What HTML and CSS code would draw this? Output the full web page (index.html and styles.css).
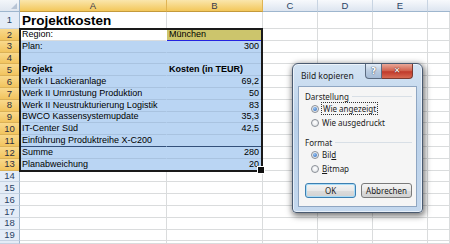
FILE: index.html
```html
<!DOCTYPE html>
<html lang="de">
<head>
<meta charset="utf-8">
<title>Projektkosten</title>
<link rel="stylesheet" href="styles.css">
</head>
<body>
<div class="sheet">
  <div class="corner"></div><div class="ch on">A</div><div class="ch on">B</div><div class="ch">C</div><div class="ch">D</div><div class="ch">E</div><div class="ch last"></div>

  <div class="rh">1</div><div class="c a title">Projektkosten</div><div class="c"></div><div class="c"></div><div class="c"></div><div class="c"></div><div class="c"></div>

  <div class="rh on">2</div><div class="c a act">Region:</div><div class="c b2">München</div><div class="c"></div><div class="c"></div><div class="c"></div><div class="c"></div>
  <div class="rh on">3</div><div class="c a s">Plan:</div><div class="c s n">300</div><div class="c"></div><div class="c"></div><div class="c"></div><div class="c"></div>
  <div class="rh on">4</div><div class="c a s"></div><div class="c s"></div><div class="c"></div><div class="c"></div><div class="c"></div><div class="c"></div>
  <div class="rh on">5</div><div class="c a s bold">Projekt</div><div class="c s bold">Kosten (in TEUR)</div><div class="c"></div><div class="c"></div><div class="c"></div><div class="c"></div>
  <div class="rh on">6</div><div class="c a s">Werk I Lackieranlage</div><div class="c s n">69,2</div><div class="c"></div><div class="c"></div><div class="c"></div><div class="c"></div>
  <div class="rh on">7</div><div class="c a s">Werk II Umrüstung Produktion</div><div class="c s n">50</div><div class="c"></div><div class="c"></div><div class="c"></div><div class="c"></div>
  <div class="rh on">8</div><div class="c a s">Werk II Neustrukturierung Logistik</div><div class="c s n">83</div><div class="c"></div><div class="c"></div><div class="c"></div><div class="c"></div>
  <div class="rh on">9</div><div class="c a s">BWCO Kassensystemupdate</div><div class="c s n">35,3</div><div class="c"></div><div class="c"></div><div class="c"></div><div class="c"></div>
  <div class="rh on">10</div><div class="c a s">IT-Center Süd</div><div class="c s n">42,5</div><div class="c"></div><div class="c"></div><div class="c"></div><div class="c"></div>
  <div class="rh on">11</div><div class="c a s bb">Einführung Produktreihe X-C200</div><div class="c s bb"></div><div class="c"></div><div class="c"></div><div class="c"></div><div class="c"></div>
  <div class="rh on">12</div><div class="c a s">Summe</div><div class="c s n">280</div><div class="c"></div><div class="c"></div><div class="c"></div><div class="c"></div>
  <div class="rh on">13</div><div class="c a s">Planabweichung</div><div class="c s n">20</div><div class="c"></div><div class="c"></div><div class="c"></div><div class="c"></div>

  <div class="rh">14</div><div class="c a"></div><div class="c"></div><div class="c"></div><div class="c"></div><div class="c"></div><div class="c"></div>
  <div class="rh">15</div><div class="c a"></div><div class="c"></div><div class="c"></div><div class="c"></div><div class="c"></div><div class="c"></div>
  <div class="rh">16</div><div class="c a"></div><div class="c"></div><div class="c"></div><div class="c"></div><div class="c"></div><div class="c"></div>
  <div class="rh">17</div><div class="c a"></div><div class="c"></div><div class="c"></div><div class="c"></div><div class="c"></div><div class="c"></div>
  <div class="rh">18</div><div class="c a"></div><div class="c"></div><div class="c"></div><div class="c"></div><div class="c"></div><div class="c"></div>
  <div class="rh">19</div><div class="c a"></div><div class="c"></div><div class="c"></div><div class="c"></div><div class="c"></div><div class="c"></div>
  <div class="rh"></div><div class="c a"></div><div class="c"></div><div class="c"></div><div class="c"></div><div class="c"></div><div class="c"></div>

  <div class="sel"></div>
</div>

<div class="dlg">
  <div class="tbar">
    <span class="ttl">Bild kopieren</span>
    <div class="caps">
      <span class="cb help">?</span>
      <span class="cb close">✕</span>
    </div>
  </div>
  <div class="body">
    <div class="grp"><span>Darstellung</span></div>
    <div class="opt"><span class="rad on"></span><span class="focus">Wie angezeigt</span></div>
    <div class="opt"><span class="rad"></span><span>Wie ausgedruckt</span></div>
    <div class="grp fmt"><span>Format</span></div>
    <div class="opt"><span class="rad on"></span><span>Bil<u>d</u></span></div>
    <div class="opt"><span class="rad"></span><span><u>B</u>itmap</span></div>
    <div class="btns"><span class="btn def">OK</span><span class="btn">Abbrechen</span></div>
  </div>
</div>
</body>
</html>
```

FILE: styles.css
```css
* { box-sizing: border-box; margin: 0; padding: 0; }
html, body { width: 450px; height: 244px; overflow: hidden; background: #fff; }
body {
  position: relative;
  font-family: "Liberation Sans", Arial, sans-serif;
  font-size: 9px;
  color: #000;
}

/* ---------- spreadsheet ---------- */
.sheet {
  position: relative;
  display: grid;
  grid-template-columns: 20px 147px 96px 55px 55px 55px 1fr;
  grid-template-rows: 12px 17px repeat(18, 11.8px) 1fr;
  height: 244px;
}
.corner {
  position: relative;
  background: linear-gradient(#f3f6fa, #dfe6ef);
  border-right: 1px solid #9eb6ce;
  border-bottom: 1px solid #9eb6ce;
}
.corner::after {
  content: "";
  position: absolute;
  right: 2px;
  bottom: 2px;
  border-left: 6px solid transparent;
  border-bottom: 6px solid #b7c4d5;
}
.ch {
  display: flex;
  align-items: center;
  justify-content: center;
  background: linear-gradient(#f7f9fc, #dde5f0);
  border-right: 1px solid #c8d4e2;
  border-bottom: 1px solid #9eb6ce;
  color: #2a4365;
  font-size: 9.5px;
  line-height: 1;
}
.ch.on {
  background: linear-gradient(#fae6ac, #f3c75a);
  border-right-color: #e0b453;
  border-bottom-color: #c49a3b;
  color: #3a3a4a;
}
.ch.last { border-right: 0; }
.rh {
  display: flex;
  align-items: center;
  justify-content: center;
  background: #e4ecf7;
  border-right: 1px solid #9eb6ce;
  border-bottom: 1px solid #c5d2e2;
  color: #2a4365;
  font-size: 9.5px;
  line-height: 1;
}
.rh.on {
  background: linear-gradient(#f9d98c, #f2c45e);
  border-bottom-color: #dbb156;
  border-right-color: #c49a3b;
  color: #2f2f3f;
}
.c {
  display: flex;
  align-items: flex-end;
  padding: 0 2px 1px 2px;
  border-right: 1px solid #dadcdd;
  border-bottom: 1px solid #dadcdd;
  white-space: nowrap;
  line-height: 10px;
  min-width: 0;
}
.c.a { position: relative; z-index: 1; overflow: visible; }
.c.title {
  font-weight: bold;
  font-size: 13.5px;
  line-height: 15px;
  padding-bottom: 0;
}
.c.bold { font-weight: bold; }
.c.n { justify-content: flex-end; padding-right: 3px; }
.c.s {
  background: #bad5f3;
  border-right-color: #a9c3e0;
  border-bottom-color: #a9c3e0;
}
.c.a.s { border-right-color: #bad5f3; }
.c.act { background: #fff; border-right-color: #fff; }
.c.b2 {
  background: #ccc56c;
  border-right-color: #2424e0;
  border-bottom-color: #2424e0;
  box-shadow: inset 0 1px #2424e0, inset -1px 0 #2424e0;
}
.c.bb { border-bottom-color: #33507a; }

.sel {
  position: absolute;
  grid-row: 3 / 15;
  grid-column: 2 / 4;
  top: -1px;
  left: -1px;
  right: 0;
  bottom: -1px;
  border: 2px solid #1a1a1a;
  z-index: 2;
  pointer-events: none;
}
.sel::after {
  content: "";
  position: absolute;
  right: -4px;
  bottom: -4px;
  width: 6px;
  height: 6px;
  background: #111;
  border: 1px solid #fff;
}

/* ---------- dialog ---------- */
.dlg {
  position: absolute;
  left: 292px;
  top: 63px;
  width: 131px;
  height: 150px;
  z-index: 5;
  display: flex;
  flex-direction: column;
  padding: 0 5px 5px 5px;
  border: 1px solid #4a5a70;
  border-radius: 6px 6px 4px 4px;
  background: linear-gradient(#d3e3f3, #b9d0e9 40%, #c4d8ee);
  box-shadow: 1px 2px 6px 1px rgba(0, 0, 0, 0.55), inset 0 0 0 1px rgba(255, 255, 255, 0.6);
  font-family: "Noto Sans", "Open Sans", sans-serif;
  font-size: 8px;
  color: #1b1b1b;
}
.tbar {
  height: 22px;
  display: flex;
  align-items: flex-start;
  justify-content: space-between;
}
.ttl {
  margin-top: 7px;
  margin-left: 3px;
  line-height: 10px;
  font-size: 8.5px;
}
.caps {
  display: flex;
  margin-right: 4px;
}
.cb {
  height: 15px;
  display: flex;
  align-items: center;
  justify-content: center;
  border: 1px solid #5b6b80;
  border-top: 0;
  color: #fff;
  font-weight: bold;
  font-family: "DejaVu Sans", sans-serif;
  line-height: 1;
}
.help {
  width: 17px;
  border-radius: 0 0 0 4px;
  background: linear-gradient(#e3ecf6, #b9cbe0 50%, #a6bcd6);
  font-size: 9px;
  text-shadow: 0 0 1px #3b4b63, 0 0 1px #3b4b63;
}
.close {
  width: 31px;
  border-left: 0;
  border-color: #7b3a30;
  border-radius: 0 0 4px 0;
  background: linear-gradient(#e9a898, #cf5e4a 50%, #c0392a 55%, #d76a52);
  font-size: 8px;
  text-shadow: 0 0 1px #5a1a10, 0 0 1px #5a1a10;
}
.body {
  flex: 1;
  display: flex;
  flex-direction: column;
  padding: 3px 4px 0 6px;
  background: #f5f5f5;
  border: 1px solid #8fa6c2;
}
.grp {
  height: 12px;
  display: flex;
  align-items: center;
  gap: 3px;
}
.grp::after {
  content: "";
  flex: 1;
  height: 1px;
  background: #d8dfe6;
}
.grp.fmt { margin-top: 6px; }
.opt {
  height: 13px;
  display: flex;
  align-items: center;
  gap: 3px;
  padding-left: 6px;
}
.opt + .opt { height: 15px; }
.rad {
  width: 8px;
  height: 8px;
  border-radius: 50%;
  border: 1px solid #8a8f96;
  background: radial-gradient(circle at 50% 40%, #ffffff, #dcdfe3);
  display: flex;
  align-items: center;
  justify-content: center;
}
.rad.on::after {
  content: "";
  width: 4px;
  height: 4px;
  border-radius: 50%;
  background: radial-gradient(circle at 40% 35%, #9cc6f2, #1f5db5);
}
.focus {
  outline: 1px dotted #333;
  outline-offset: 0;
  padding: 0 1px;
}
u { text-decoration-thickness: 1px; text-underline-offset: 1px; }
.btns {
  margin-top: 7px;
  display: flex;
  justify-content: space-between;
}
.btn {
  width: 51px;
  height: 15px;
  display: flex;
  align-items: center;
  justify-content: center;
  border: 1px solid #7a7a7a;
  border-radius: 3px;
  background: linear-gradient(#f4f4f4, #e8e8e8 50%, #dcdcdc 51%, #d2d2d2);
  line-height: 1;
}
.btn.def {
  border-color: #3c7fb1;
  box-shadow: inset 0 0 0 1px #a9dcf7;
}
```
